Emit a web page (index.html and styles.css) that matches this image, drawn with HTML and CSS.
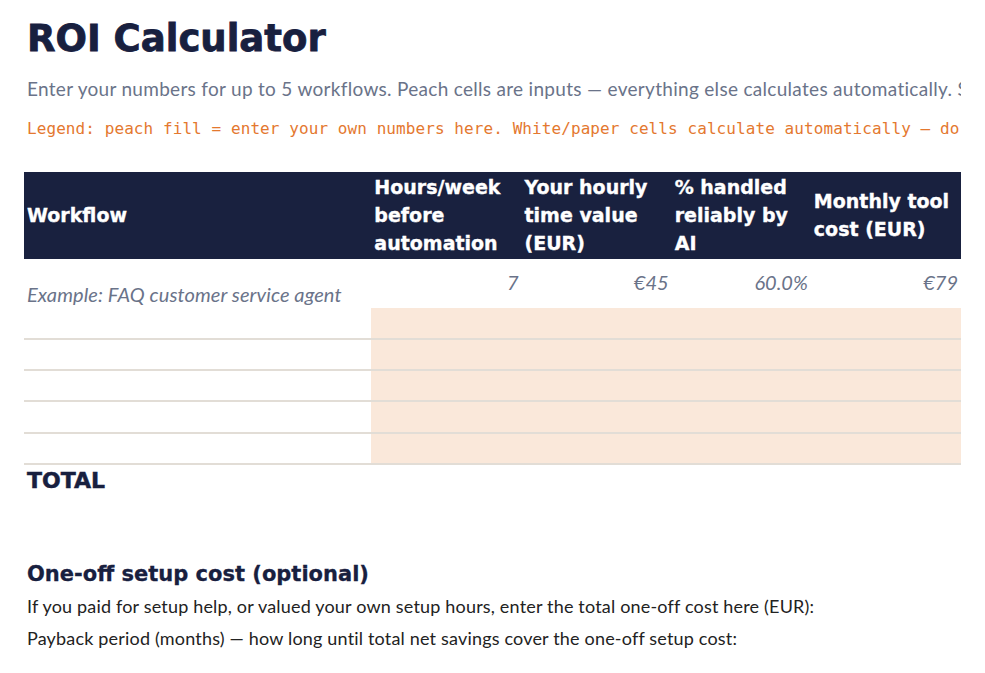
FILE: index.html
```html
<!DOCTYPE html>
<html lang="en">
<head>
<meta charset="utf-8">
<title>ROI Calculator</title>
<link rel="stylesheet" href="styles.css">
</head>
<body>
<div class="sheet">
  <h1 class="title">ROI Calculator</h1>
  <p class="subtitle">Enter your numbers for up to 5 workflows. Peach cells are inputs — everything else calculates automatically. See the notes below.</p>
  <p class="legend">Legend: peach fill = enter your own numbers here. White/paper cells calculate automatically — do not edit them.</p>

  <table class="roi">
    <colgroup>
      <col class="c-workflow">
      <col class="c-num">
      <col class="c-num">
      <col class="c-pct">
      <col class="c-num">
    </colgroup>
    <thead>
      <tr>
        <th>Workflow</th>
        <th>Hours/week before automation</th>
        <th>Your hourly time value (EUR)</th>
        <th>% handled reliably by AI</th>
        <th>Monthly tool cost (EUR)</th>
      </tr>
    </thead>
    <tbody>
      <tr class="example">
        <td class="ex-name">Example: FAQ customer service agent</td>
        <td class="ex-val">7</td>
        <td class="ex-val">€45</td>
        <td class="ex-val">60.0%</td>
        <td class="ex-val">€79</td>
      </tr>
      <tr class="input-row first"><td></td><td class="in"></td><td class="in"></td><td class="in"></td><td class="in"></td></tr>
      <tr class="input-row"><td></td><td class="in"></td><td class="in"></td><td class="in"></td><td class="in"></td></tr>
      <tr class="input-row"><td></td><td class="in"></td><td class="in"></td><td class="in"></td><td class="in"></td></tr>
      <tr class="input-row tall"><td></td><td class="in"></td><td class="in"></td><td class="in"></td><td class="in"></td></tr>
      <tr class="input-row"><td></td><td class="in"></td><td class="in"></td><td class="in"></td><td class="in"></td></tr>
      <tr class="total-row">
        <td class="total">TOTAL</td><td></td><td></td><td></td><td></td>
      </tr>
    </tbody>
  </table>

  <h2 class="section">One-off setup cost (optional)</h2>
  <p class="body-line">If you paid for setup help, or valued your own setup hours, enter the total one-off cost here (EUR):</p>
  <p class="body-line">Payback period (months) — how long until total net savings cover the one-off setup cost:</p>
</div>
</body>
</html>
```

FILE: styles.css
```css
html, body {
  margin: 0;
  padding: 0;
  background: #ffffff;
}

.sheet {
  margin-left: 24px;
  width: 937px;
  overflow: hidden;
  white-space: nowrap;
}

.title {
  margin: 17px 0 0 0;
  padding-left: 3px;
  font-family: "DejaVu Sans", sans-serif;
  font-weight: 700;
  font-size: 37px;
  line-height: 44px;
  color: #18203f;
  -webkit-text-stroke: 0.8px #18203f;
}

.subtitle {
  margin: 17px 0 0 0;
  padding-left: 3px;
  font-family: Lato, "Open Sans", sans-serif;
  font-size: 19px;
  letter-spacing: 0.3px;
  line-height: 22px;
  color: #6a7389;
}

.legend {
  margin: 19px 0 0 0;
  padding-left: 3px;
  font-family: "DejaVu Sans Mono", "Liberation Mono", monospace;
  font-size: 16px;
  letter-spacing: 0.08px;
  line-height: 20px;
  color: #e4782f;
}

.roi {
  margin-top: 33px;
  border-collapse: collapse;
  table-layout: fixed;
  width: 937px;
}

.c-workflow { width: 347px; }
.c-num { width: 150px; }
.c-pct { width: 139px; }

.roi th {
  background: #19213f;
  color: #ffffff;
  font-family: "DejaVu Sans", sans-serif;
  font-weight: 700;
  font-size: 19px;
  line-height: 28px;
  text-align: left;
  vertical-align: middle;
  white-space: normal;
  padding: 1px 3px 2px 3px;
  height: 84px;
  -webkit-text-stroke: 0.35px #ffffff;
}

.roi td {
  padding: 0 3px;
  font-family: Lato, "Open Sans", sans-serif;
}

.example td {
  color: #6a7389;
  font-style: italic;
  font-size: 20px;
  line-height: 24px;
  vertical-align: top;
}

.ex-name {
  padding-top: 23px !important;
  height: 26px;
  letter-spacing: 0.1px;
}

.ex-val {
  text-align: right;
  padding-top: 11px !important;
  height: 38px;
}

.input-row td {
  height: 29px;
  border-bottom: 2px solid #e2ddd6;
}

.input-row.first td,
.input-row.tall td {
  height: 30px;
}

.input-row td.in {
  background: #fae8da;
}

.total-row td {
  height: 30px;
}

.total {
  font-family: "DejaVu Sans", sans-serif !important;
  font-weight: 700;
  font-size: 22px;
  color: #18203f;
  vertical-align: middle;
  -webkit-text-stroke: 0.5px #18203f;
}

.section {
  margin: 66px 0 0 0;
  padding-left: 3px;
  font-family: "DejaVu Sans", sans-serif;
  font-weight: 700;
  font-size: 21px;
  line-height: 26px;
  color: #18203f;
  -webkit-text-stroke: 0.3px #18203f;
}

.body-line {
  margin: 7px 0 0 0;
  padding-left: 3px;
  font-family: Lato, "Open Sans", sans-serif;
  font-size: 18px;
  letter-spacing: 0.18px;
  line-height: 25px;
  color: #222222;
}
```
